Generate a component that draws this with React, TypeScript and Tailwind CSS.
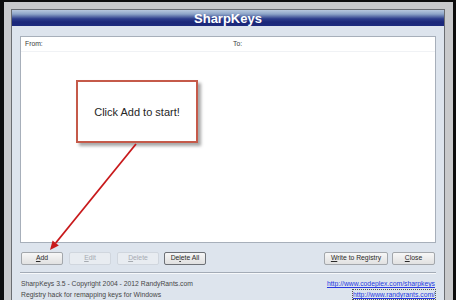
import React from 'react';

const font = { fontFamily: '"Liberation Sans", Arial, sans-serif' };

const Btn = ({
  children,
  width,
  disabled = false,
  focused = false,
}: {
  children: React.ReactNode;
  width: string;
  disabled?: boolean;
  focused?: boolean;
}) => (
  <div
    className={`${width} h-[13px] flex items-center justify-center rounded-[2px] border text-[6.8px] leading-none ${
      disabled
        ? 'border-[#d0d6de] bg-[#e8ecf1] text-[#a6abb1]'
        : focused
        ? 'border-[#6d7177] bg-gradient-to-b from-[#f6f6f6] to-[#e0e0e0] text-[#2a2a2a]'
        : 'border-[#a3a7ac] bg-gradient-to-b from-[#f7f7f7] to-[#e1e1e1] text-[#2a2a2a]'
    }`}
  >
    {children}
  </div>
);

export default function App() {
  return (
    <div className="relative w-[456px] h-[300px] overflow-hidden bg-[#0d0d0d] pl-[4px] pr-[3px] pt-[2px]" style={font}>
      {/* gray outer frame */}
      <div className="h-full bg-[#c8c9cb] pl-[7px] pr-[8px] pt-[7px]">
        <div className="h-full border-l border-t border-r border-[#6a6d72] flex flex-col">
          {/* title bar */}
          <div className="h-[16px] flex items-center justify-center bg-[linear-gradient(to_bottom,#b7c8de_0%,#8ea5c8_25%,#2c3d8c_55%,#1b2779_75%,#1c2a7d_100%)]">
            <span className="text-white font-bold text-[13px] leading-none">SharpKeys</span>
          </div>

          {/* body */}
          <div className="flex-1 bg-[#dde4ed] px-[8px] pt-[10px]">
            {/* list view */}
            <div className="h-[207px] border border-[#a7afba] bg-white">
              <div className="h-[15px] flex items-center border-b border-[#f0f2f5] text-[6.8px] text-[#3a3a3a]">
                <div className="w-1/2 pl-[4px]">From:</div>
                <div className="w-1/2 pl-[5px]">To:</div>
              </div>
            </div>

            {/* buttons */}
            <div className="mt-[9px] flex items-center pl-[1px] pr-[1px]">
              <div className="flex gap-[6px]">
                <Btn width="w-[42px]">
                  <span className="underline">A</span>dd
                </Btn>
                <Btn width="w-[42px]" disabled>
                  <span className="underline">E</span>dit
                </Btn>
                <Btn width="w-[42px]" disabled>
                  <span className="underline">D</span>elete
                </Btn>
              </div>
              <div className="ml-[5px]">
                <Btn width="w-[42px]" focused>
                  De<span className="underline">l</span>ete All
                </Btn>
              </div>
              <div className="ml-auto flex gap-[4px]">
                <Btn width="w-[64px]">
                  <span className="underline">W</span>rite to Registry
                </Btn>
                <Btn width="w-[43px]">
                  <span className="underline">C</span>lose
                </Btn>
              </div>
            </div>

            {/* separator */}
            <div className="mt-[7px] h-[2px] border-t border-[#a3abb6] border-b border-b-[#f7f9fb]" />

            {/* footer */}
            <div className="mt-[4px] flex justify-between pl-[1px] pr-[1px] text-[6.8px] leading-[11px]">
              <div className="text-[#474747]">
                <div>SharpKeys 3.5 - Copyright 2004 - 2012 RandyRants.com</div>
                <div>Registry hack for remapping keys for Windows</div>
              </div>
              <div className="flex flex-col items-end text-[#2638e0]">
                <div className="underline">http://www.codeplex.com/sharpkeys</div>
                <div className="underline outline-1 outline-dotted outline-[#555] leading-[9px] mt-[1px]">http://www.randyrants.com/</div>
              </div>
            </div>
          </div>
        </div>
      </div>

      {/* callout */}
      <div className="absolute left-[76px] top-[80px] w-[122px] h-[63px] border-2 border-[#c55a4a] bg-white shadow-[3px_3px_3px_rgba(0,0,0,0.35)] flex items-center justify-center">
        <span className="text-[11px] text-[#262626] leading-none mt-[2px]">Click Add to start!</span>
      </div>

      {/* arrow */}
      <svg className="absolute left-0 top-0" width="456" height="300" viewBox="0 0 456 300">
        <line x1="136" y1="144" x2="55.7" y2="243" stroke="#c8191b" strokeWidth="1.8" />
        <polygon points="50,250 58.8,245.5 52.6,240.5" fill="#c8191b" />
      </svg>
    </div>
  );
}
